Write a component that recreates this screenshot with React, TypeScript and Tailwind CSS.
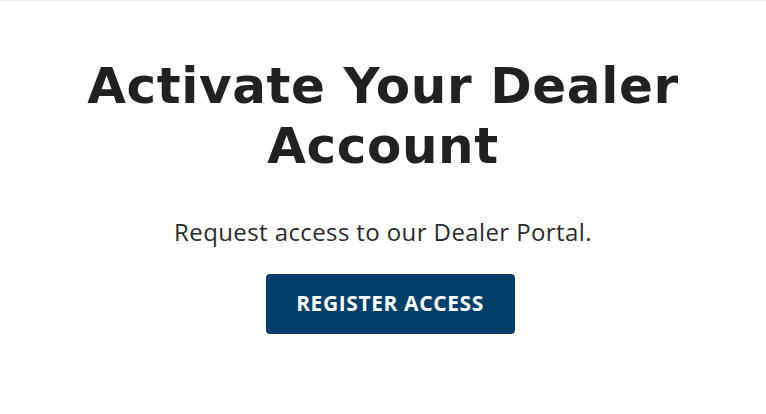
export default function App() {
  return (
    <div className="min-h-[414px] w-full bg-white border-t border-[#f0f0f0] flex flex-col items-center pt-[55px] font-['Open_Sans',sans-serif]">
      <h1 className="text-center text-[50px] leading-[60px] font-bold text-[#212121] font-['DejaVu_Sans',sans-serif] tracking-[0.6px]">
        Activate Your Dealer
        <br />
        Account
      </h1>

      <p className="mt-[41px] text-[24px] leading-[30px] text-[#2b2b2b] tracking-[0.4px]">
        Request access to our Dealer Portal.
      </p>

      <button className="mt-[27px] ml-[14px] w-[249px] h-[60px] rounded-[4px] bg-[#013f6b] text-white text-[21px] font-bold tracking-[0.6px]">
        REGISTER ACCESS
      </button>
    </div>
  );
}
